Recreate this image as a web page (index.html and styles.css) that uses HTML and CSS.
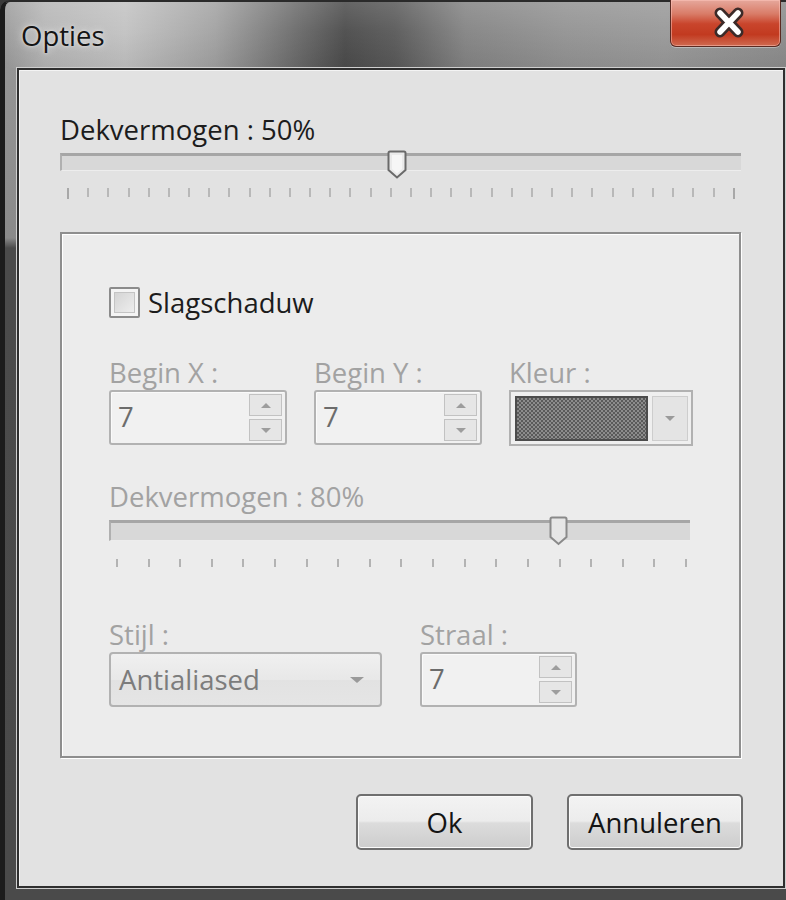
FILE: index.html
```html
<!DOCTYPE html>
<html lang="nl">
<head>
<meta charset="utf-8">
<title>Opties</title>
<link rel="stylesheet" href="styles.css">
</head>
<body>
<div class="window">
  <div class="titlebar">
    <span class="title">Opties</span>
    <div class="close">
      <svg width="111" height="48" viewBox="0 0 111 48">
        <path d="M49 13 L67 32 M67 13 L49 32" stroke="#3b2a28" stroke-width="11" stroke-linecap="round" fill="none"/>
        <path d="M49 13 L67 32 M67 13 L49 32" stroke="#ffffff" stroke-width="5.5" stroke-linecap="round" fill="none"/>
      </svg>
    </div>
  </div>
  <div class="frame-body">
    <div class="client">
      <div class="label main">Dekvermogen : 50%</div>
      <div class="slider s1">
        <div class="track"></div>
        <svg class="thumb" width="20" height="29" viewBox="0 0 20 29"><path d="M3 1.5 H17 Q18.5 1.5 18.5 3 V20 L10 27.5 L1.5 20 V3 Q1.5 1.5 3 1.5 Z" fill="#eaeaea" stroke="#6a6a6a" stroke-width="2"/><path d="M5 5 H15 V19 L10 23.5 L5 19 Z" fill="#f6f6f6"/></svg>
        <div class="ticks t34">
          <i></i><i></i><i></i><i></i><i></i><i></i><i></i><i></i><i></i><i></i>
          <i></i><i></i><i></i><i></i><i></i><i></i><i></i><i></i><i></i><i></i>
          <i></i><i></i><i></i><i></i><i></i><i></i><i></i><i></i><i></i><i></i>
          <i></i><i></i><i></i><i></i>
        </div>
      </div>

      <div class="group">
        <div class="check-row">
          <span class="checkbox"></span>
          <span class="label main">Slagschaduw</span>
        </div>

        <div class="row fields">
          <div class="field fx">
            <div class="label dis">Begin X :</div>
            <div class="spin">
              <span class="value">7</span>
              <span class="spin-btns"><span class="sb up"></span><span class="sb down"></span></span>
            </div>
          </div>
          <div class="field fy">
            <div class="label dis">Begin Y :</div>
            <div class="spin">
              <span class="value">7</span>
              <span class="spin-btns"><span class="sb up"></span><span class="sb down"></span></span>
            </div>
          </div>
          <div class="field fk">
            <div class="label dis">Kleur :</div>
            <div class="color-combo">
              <span class="swatch"></span>
              <span class="dd-btn"><span class="arrow"></span></span>
            </div>
          </div>
        </div>

        <div class="label dis op2">Dekvermogen : 80%</div>
        <div class="slider s2">
          <div class="track"></div>
          <svg class="thumb" width="19" height="30" viewBox="0 0 19 30"><path d="M3 1.5 H16 Q17.5 1.5 17.5 3 V21 L9.5 28 L1.5 21 V3 Q1.5 1.5 3 1.5 Z" fill="#e6e6e6" stroke="#8a8a8a" stroke-width="2"/></svg>
          <div class="ticks t19">
            <i></i><i></i><i></i><i></i><i></i><i></i><i></i><i></i><i></i><i></i>
            <i></i><i></i><i></i><i></i><i></i><i></i><i></i><i></i><i></i>
          </div>
        </div>

        <div class="row fields2">
          <div class="field fs">
            <div class="label dis">Stijl :</div>
            <div class="combo">
              <span class="combo-text">Antialiased</span>
              <span class="arrow"></span>
            </div>
          </div>
          <div class="field fr">
            <div class="label dis">Straal :</div>
            <div class="spin">
              <span class="value">7</span>
              <span class="spin-btns"><span class="sb up"></span><span class="sb down"></span></span>
            </div>
          </div>
        </div>
      </div>

      <div class="buttons">
        <button class="btn">Ok</button>
        <button class="btn">Annuleren</button>
      </div>
    </div>
  </div>
</div>
</body>
</html>
```
FILE: styles.css
```css
* { box-sizing: border-box; }
html, body { margin: 0; padding: 0; background: #3a3a3a; }
body { font-family: "Open Sans", "Noto Sans", sans-serif; }

.window {
  width: 786px;
  height: 900px;
  overflow: hidden;
  display: flex;
  flex-direction: column;
  background: #3f3f3f;
  border-top-left-radius: 10px;
  position: relative;
}

.titlebar {
  height: 68px;
  flex: none;
  display: flex;
  align-items: flex-start;
  justify-content: space-between;
  background:
    linear-gradient(180deg, rgba(255,255,255,0.14) 0%, rgba(255,255,255,0.04) 45%, rgba(0,0,0,0.06) 100%),
    linear-gradient(90deg, #9c9c9c 0px, #b6b6b6 40px, #c2c2c2 120px, #a2a2a2 210px, #6c6c6c 290px, #4c4c4c 340px, #5a5a5a 390px, #848484 460px, #939393 560px, #999999 660px, #8c8c8c 786px);
  border-top: 2px solid #2a2a2a;
  border-left: 5px solid #1c1c1c;
  border-top-left-radius: 10px;
}
.title {
  font-size: 27.5px;
  line-height: 34px;
  color: #141414;
  margin: 17px 0 0 16px;
  text-shadow: 0 0 8px rgba(235,235,235,0.9), 0 0 3px rgba(240,240,240,0.8);
}
.close {
  width: 111px;
  height: 47px;
  margin-top: -2px;
  margin-right: 5px;
  border: 1px solid #5a2a22;
  border-top: none;
  border-radius: 0 0 6px 6px;
  background: linear-gradient(180deg, #e6a89c 0%, #d97c68 30%, #c9452c 52%, #c23a20 75%, #cf6a50 100%);
  box-shadow: inset 0 0 0 1px rgba(255,200,190,0.5), 0 1px 0 rgba(255,255,255,0.35);
}
.close svg { display: block; }

.frame-body {
  flex: 1;
  display: flex;
  padding: 0 2px 12px 0;
  background: linear-gradient(180deg, #959595 0px, #8a8a8a 170px, #4b4b4b 180px, #4a4a4a 100%);
  border-left: 5px solid #1c1c1c;
}
.frame-body::before {
  content: "";
  width: 12px;
  flex: none;
}

.client {
  flex: 1;
  background: #e2e2e2;
  border: 2px solid #2f2f2f;
  box-shadow: inset 1px 1px 0 #f4f4f4, 0 0 0 1px #cfcfcf;
  padding: 44px 42px 0 41px;
  display: flex;
  flex-direction: column;
}

.label {
  font-size: 27.5px;
  line-height: 32px;
  white-space: nowrap;
}
.label.main { color: #1c1c1c; }
.label.dis { color: #a2a2a2; }

.slider { position: relative; }
.slider .track {
  background: #d8d8d8;
  border-top: 3px solid #a6a6a6;
  border-left: 2px solid #b0b0b0;
  border-bottom: 1px solid #ededed;
}
.slider .thumb { position: absolute; }
.ticks { display: flex; justify-content: space-between; }
.ticks i {
  display: block;
  width: 2px;
  height: 9px;
  background: #b8b8b8;
}
.ticks i:first-child, .ticks i:last-child { background: #a8a8a8; height: 11px; }

.s1 { margin-top: 7px; height: 46px; }
.s1 .track { height: 18px; }
.s1 .thumb { left: 327px; top: -3px; }
.s1 .ticks { margin-top: 17px; padding: 0 6px 0 7px; }

.group {
  margin-top: 33px;
  width: 681px;
  height: 526px;
  border: 2px solid #8e8e8e;
  box-shadow: inset 1px 1px 0 #ffffff, 1px 1px 0 #ffffff;
  background: #ececec;
  padding: 53px 0 0 47px;
  display: flex;
  flex-direction: column;
}

.check-row { display: flex; align-items: center; gap: 8px; height: 31px; }
.checkbox {
  width: 31px;
  height: 31px;
  border: 2px solid #8b8b8b;
  background: linear-gradient(135deg, #cfcfcf, #f3f3f3);
  box-shadow: inset 0 0 0 3px #f4f4f4, inset 0 0 0 4px #c4c4c4;
  border-radius: 2px;
}

.row { display: flex; gap: 27px; }
.field { display: flex; flex-direction: column; }
.fields { margin-top: 39px; }
.fields .label { height: 33px; }
.fx { width: 178px; }
.fy { width: 168px; }
.fk { width: 184px; }

.spin {
  height: 55px;
  border: 2px solid #b2b2b2;
  border-radius: 3px;
  background: #f1f1f1;
  box-shadow: inset 1px 1px 0 #fafafa;
  display: flex;
  justify-content: space-between;
  padding: 2px 3px 2px 7px;
}
.value {
  font-size: 27.5px;
  line-height: 46px;
  color: #6c6c6c;
}
.spin-btns {
  width: 33px;
  display: flex;
  flex-direction: column;
  gap: 3px;
}
.sb {
  flex: 1;
  border: 1px solid #c2c2c2;
  background: #e6e6e6;
  position: relative;
  display: flex;
  align-items: center;
  justify-content: center;
}
.sb::after {
  content: "";
  border-left: 5px solid transparent;
  border-right: 5px solid transparent;
}
.sb.up::after { border-bottom: 5px solid #9d9d9d; }
.sb.down::after { border-top: 5px solid #9d9d9d; }

.color-combo {
  height: 56px;
  border: 2px solid #b1b1b1;
  background: #efefef;
  display: flex;
  gap: 4px;
  padding: 4px 3px 3px 4px;
}
.swatch {
  width: 133px;
  border: 2px solid #4c4c4c;
  background-color: #8c8c8c;
  background-image:
    linear-gradient(45deg, #5a5a5a 25%, transparent 25%, transparent 75%, #5a5a5a 75%),
    linear-gradient(45deg, #5a5a5a 25%, transparent 25%, transparent 75%, #5a5a5a 75%);
  background-size: 4px 4px;
  background-position: 0 0, 2px 2px;
}
.dd-btn {
  flex: 1;
  background: #e4e4e4;
  border: 1px solid #cdcdcd;
  display: flex;
  align-items: center;
  justify-content: center;
}
.arrow {
  width: 0;
  height: 0;
  border-left: 5px solid transparent;
  border-right: 5px solid transparent;
  border-top: 5px solid #9a9a9a;
}

.op2 { margin-top: 35px; }
.s2 { margin-top: 7px; width: 581px; height: 48px; }
.s2 .track { height: 21px; border-top-width: 3px; }
.s2 .thumb { left: 440px; top: -4px; }
.s2 .ticks { margin-top: 18px; padding: 0 3px 0 7px; }
.s2 .ticks i { height: 8px; background: #b3b3b3; }

.fields2 { margin-top: 51px; gap: 38px; }
.fields2 .label { height: 33px; }
.fs { width: 273px; }
.fr { width: 157px; }
.combo {
  height: 55px;
  border: 2px solid #b2b2b2;
  border-radius: 4px;
  background: linear-gradient(180deg, #f0f0f0, #e8e8e8 50%, #e2e2e2 51%, #e5e5e5);
  display: flex;
  align-items: center;
  justify-content: space-between;
  padding: 0 16px 0 8px;
}
.combo-text { font-size: 27.5px; color: #7c7c7c; }
.combo .arrow { border-left-width: 7px; border-right-width: 7px; border-top-width: 6px; }

.buttons {
  margin-top: 36px;
  display: flex;
  justify-content: flex-end;
  gap: 34px;
  padding-right: 0;
}
.btn {
  width: 177px;
  height: 56px;
  font-family: "Open Sans", "Noto Sans", sans-serif;
  font-size: 27.5px;
  color: #141414;
  border: 2px solid #6f6f6f;
  border-radius: 5px;
  background: linear-gradient(180deg, #f3f3f3 0%, #ececec 48%, #dcdcdc 52%, #cdcdcd 100%);
  box-shadow: inset 0 0 0 1px #fbfbfb;
  padding: 0;
}
.btn + .btn { width: 176px; margin-right: -2px; }
```
